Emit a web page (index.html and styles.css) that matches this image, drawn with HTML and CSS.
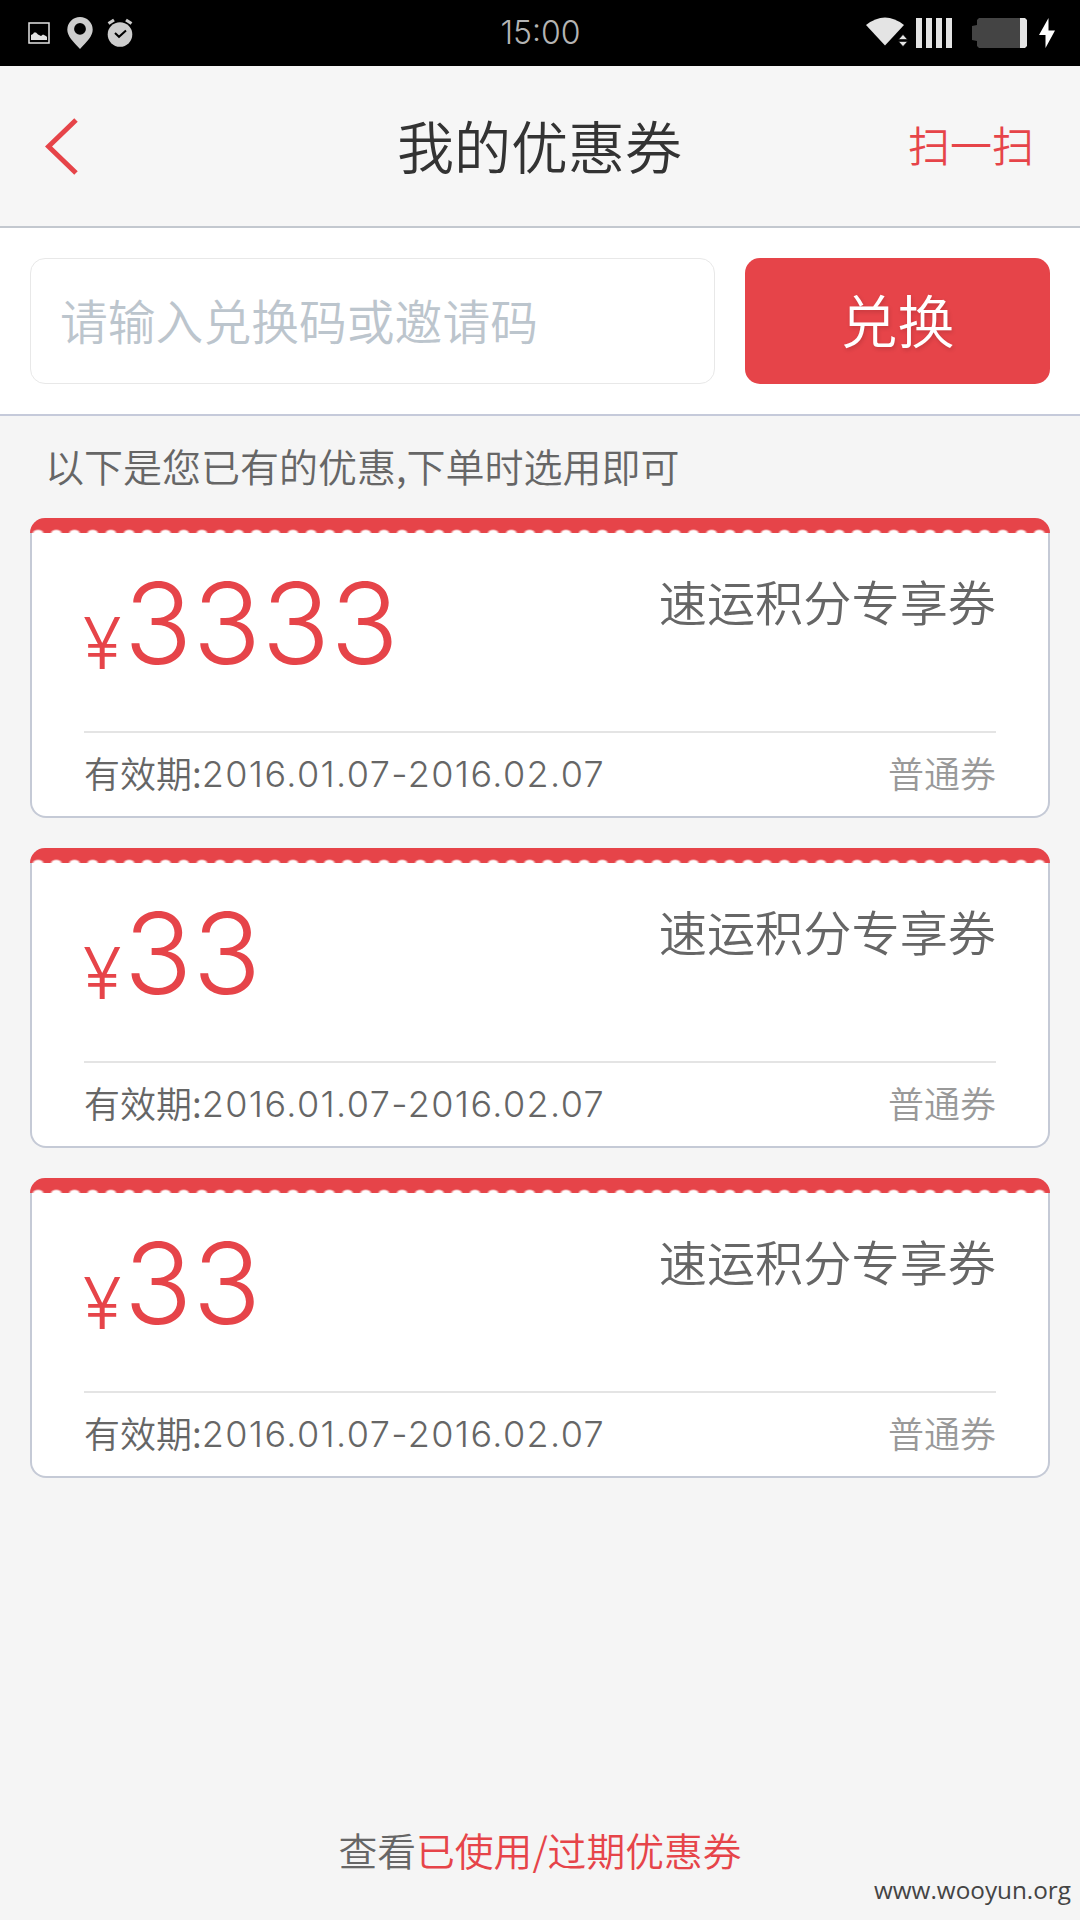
FILE: index.html
```
<!DOCTYPE html>
<html lang="zh-CN">
<head>
<meta charset="utf-8">
<title>我的优惠券</title>
<link rel="stylesheet" href="styles.css">
</head>
<body>
<div class="statusbar">
  <div class="status-left">
    <svg class="ico-image" width="22" height="22" viewBox="0 0 22 22"><rect x="1" y="1" width="20" height="20" fill="none" stroke="#e4e4e4" stroke-width="1.5"/><path d="M3 18V13L5 12L6 10.500H8L10 12.500L13 14L15 12.500L18 14L19 15V18Z" fill="#e4e4e4"/></svg>
    <svg class="ico-pin" width="26" height="32" viewBox="0 0 26 32"><path fill-rule="evenodd" d="M13 0A12.700 12.700 0 0 0 .3 12.700C.3 19 6 24.500 13 32C20 24.500 25.700 19 25.700 12.700A12.700 12.700 0 0 0 13 0ZM13 6A5.900 5.900 0 1 1 13 17.800A5.900 5.900 0 1 1 13 6Z" fill="#cdcdcd"/></svg>
    <svg class="ico-alarm" width="26" height="30" viewBox="0 0 26 30"><circle cx="13" cy="16.500" r="12.300" fill="#cdcdcd"/><path d="M1.500 5.500L7 2M19 2L24.500 5.500" stroke="#cdcdcd" stroke-width="3.200"/><path d="M8 15L12 18.800L19 12.500" fill="none" stroke="#000" stroke-width="2"/></svg>
  </div>
  <time class="clock">15:00</time>
  <div class="status-right">
    <svg width="42" height="32" viewBox="0 0 42 32"><path d="M0 8Q19 -7 38 8L19 28.500Z" fill="#e4e4e4"/><path d="M32.500 22.500L37 17.500L41.500 22.500ZM32.500 24.500H41.500L37 29.500Z" fill="#e4e4e4" stroke="#000" stroke-width=".6"/></svg>
    <svg class="ico-signal" width="36" height="30" viewBox="0 0 36 30"><path d="M0 0H6V30H0ZM10 0H16V30H10ZM20 0H26V30H20ZM30 0H36V30H30Z" fill="#e4e4e4"/></svg>
    <svg class="ico-battery" width="55" height="30" viewBox="0 0 55 30"><path d="M7 0H48V30H7L5 28V23L0 22V8L5 7V2Z" fill="#444"/><path d="M48 0H53L55 2V28L53 30H48Z" fill="#e4e4e4"/></svg>
    <svg class="ico-bolt" width="16" height="30" viewBox="0 0 16 30"><path d="M9.500 0L0 17H6.500V30L16 12.500H9.500Z" fill="#fff"/></svg>
  </div>
</div>
<header class="header">
  <svg class="back" width="34" height="58" viewBox="0 0 34 58"><path d="M31 2L3.500 28.500L31 55" fill="none" stroke="#e64449" stroke-width="5"/></svg>
  <h1 class="title">我的优惠券</h1>
  <a class="scan">扫一扫</a>
</header>
<section class="redeem">
  <div class="field">请输入兑换码或邀请码</div>
  <button class="submit">兑换</button>
</section>
<main class="main">
  <p class="note">以下是您已有的优惠,下单时选用即可</p>
  <div class="list">
    <article class="card">
      <div class="edge"></div>
      <div class="top"><div class="amount"><span class="yen">¥</span><span class="num">3333</span></div><div class="name">速运积分专享券</div></div>
      <div class="bottom"><div class="valid">有效期:<span class="date">2016.01.07-2016.02.07</span></div><div class="kind">普通券</div></div>
    </article>
    <article class="card">
      <div class="edge"></div>
      <div class="top"><div class="amount"><span class="yen">¥</span><span class="num">33</span></div><div class="name">速运积分专享券</div></div>
      <div class="bottom"><div class="valid">有效期:<span class="date">2016.01.07-2016.02.07</span></div><div class="kind">普通券</div></div>
    </article>
    <article class="card">
      <div class="edge"></div>
      <div class="top"><div class="amount"><span class="yen">¥</span><span class="num">33</span></div><div class="name">速运积分专享券</div></div>
      <div class="bottom"><div class="valid">有效期:<span class="date">2016.01.07-2016.02.07</span></div><div class="kind">普通券</div></div>
    </article>
  </div>
  <div class="history">查看<a class="history-link">已使用/过期优惠券</a></div>
</main>
<div class="watermark">www.wooyun.org</div>
</body>
</html>
```
FILE: styles.css
```
* { box-sizing: border-box; }
body {
  margin: 0;
  width: 1080px;
  height: 1920px;
  overflow: hidden;
  position: relative;
  display: flex;
  flex-direction: column;
  background: #f5f5f5;
  color: #666;
  font-family: "Noto Sans CJK SC", sans-serif;
  font-weight: 350;
}
svg { display: block; flex: none; }
.statusbar {
  height: 66px;
  flex: none;
  background: #000;
  display: grid;
  grid-template-columns: 1fr auto 1fr;
  align-items: center;
  padding: 0 25px 0 28px;
}
.status-left, .status-right { display: flex; align-items: center; }
.status-right { justify-content: flex-end; }
.ico-pin { margin-left: 17px; }
.ico-alarm { margin-left: 14px; }
.ico-signal { margin-left: 8px; }
.ico-battery { margin-left: 20px; }
.ico-bolt { margin-left: 12px; }
.clock {
  font-family: Inter, sans-serif;
  font-weight: 300;
  font-size: 32px;
  line-height: 66px;
  color: #b4b4b4;
  margin-right: 2px;
}
.header {
  height: 162px;
  flex: none;
  display: grid;
  grid-template-columns: 1fr auto 1fr;
  align-items: center;
  padding: 0 46px 0 45px;
  background: #f6f6f6;
  border-bottom: 2px solid #c3c8cf;
}
.back { margin-top: 2px; }
.title {
  margin: 0;
  font-size: 57px;
  line-height: 60px;
  font-weight: 350;
  color: #333;
  padding-bottom: 5px;
}
.scan { justify-self: end; font-size: 42px; line-height: 50px; color: #e64449; padding-bottom: 4px; }
.redeem {
  height: 188px;
  flex: none;
  display: flex;
  gap: 30px;
  padding: 30px 30px 28px;
  background: #fff;
  border-bottom: 2px solid #c5cada;
}
.field {
  flex: 1;
  height: 126px;
  border: 1px solid #e8e8e8;
  border-radius: 15px;
  padding: 0 29px;
  font-size: 47.800px;
  line-height: 122px;
  color: #bcc5cd;
}
.submit {
  width: 305px;
  height: 126px;
  border: 0;
  border-radius: 15px;
  padding: 0 0 7px;
  background: #e64449;
  color: #fff;
  font: 350 57px "Noto Sans CJK SC", sans-serif;
  text-shadow: 1px 2px 4px rgba(0, 0, 0, .15);
}
.main { flex: 1; display: flex; flex-direction: column; padding: 0 30px; }
.note { margin: 0; height: 102px; padding-left: 15px; font-size: 39px; line-height: 98px; }
.list { display: flex; flex-direction: column; gap: 30px; }
.card {
  height: 300px;
  display: flex;
  flex-direction: column;
  background: #fff;
  border: 2px solid #c5cad6;
  border-top: 0;
  border-radius: 16px;
}
.edge {
  height: 15px;
  margin: 0 -2px;
  border-radius: 15px 15px 0 0;
  background: radial-gradient(ellipse 6.500px 4px at 50% 100%, #fff 55%, #e64449 100%) -1px 0 / 18.210px 15px;
}
.top {
  height: 200px;
  margin: 0 52px;
  display: flex;
  justify-content: space-between;
  align-items: flex-start;
  border-bottom: 2px solid #e4e4e4;
}
.amount { display: flex; align-items: flex-start; color: #e64449; font-family: Inter, sans-serif; font-weight: 300; }
.yen { font-size: 71px; line-height: 84px; padding-top: 68px; width: 41px; margin-left: -1px; }
.num { font-size: 112.500px; line-height: 140px; padding-top: 20px; letter-spacing: .7px; }
.name { font-size: 48.200px; line-height: 70px; padding-top: 32px; }
.bottom {
  flex: 1;
  margin: 0 52px;
  display: flex;
  justify-content: space-between;
  font-size: 36px;
  line-height: 78px;
}
.date { font-family: Inter, sans-serif; font-size: 36px; font-weight: 350; letter-spacing: 1.400px; position: relative; top: -1px; }
.kind { color: #999; }
.history { margin-top: auto; height: 142px; text-align: center; font-size: 38.800px; line-height: 56px; padding-top: 43px; }
.history-link { color: #e64449; }
.watermark {
  position: absolute;
  right: 9px;
  bottom: 12px;
  font: 400 24.300px/36px "Open Sans", sans-serif;
  color: #444;
}
```
